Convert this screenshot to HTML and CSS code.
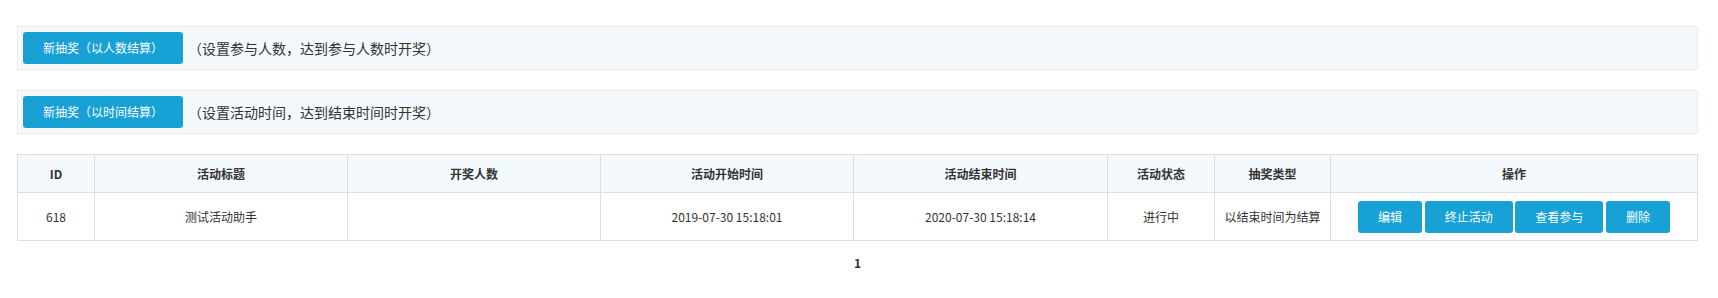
FILE: index.html
```html
<!DOCTYPE html>
<html lang="zh-CN">
<head>
  <meta charset="UTF-8" />
  <meta name="viewport" content="width=device-width, initial-scale=1.0" />
  <title>抽奖活动</title>
  <link rel="stylesheet" href="styles.css">
</head>
<body>
  <div class="page">
    <div class="tool-bar">
      <button class="btn">新抽奖（以人数结算）</button>
      <span class="tip">（设置参与人数，达到参与人数时开奖）</span>
    </div>
    <div class="tool-bar">
      <button class="btn">新抽奖（以时间结算）</button>
      <span class="tip">（设置活动时间，达到结束时间时开奖）</span>
    </div>

    <table class="list">
      <colgroup>
        <col class="c-id">
        <col class="c-title">
        <col class="c-num">
        <col class="c-start">
        <col class="c-end">
        <col class="c-status">
        <col class="c-type">
        <col class="c-ops">
      </colgroup>
      <thead>
        <tr>
          <th>ID</th>
          <th>活动标题</th>
          <th>开奖人数</th>
          <th>活动开始时间</th>
          <th>活动结束时间</th>
          <th>活动状态</th>
          <th>抽奖类型</th>
          <th>操作</th>
        </tr>
      </thead>
      <tbody>
        <tr>
          <td>618</td>
          <td>测试活动助手</td>
          <td></td>
          <td>2019-07-30 15:18:01</td>
          <td>2020-07-30 15:18:14</td>
          <td>进行中</td>
          <td>以结束时间为结算</td>
          <td class="ops">
            <button class="btn">编辑</button>
            <button class="btn">终止活动</button>
            <button class="btn">查看参与</button>
            <button class="btn">删除</button>
          </td>
        </tr>
      </tbody>
    </table>

    <div class="pager">1</div>
  </div>
</body>
</html>
```

FILE: styles.css
```css
body {
  margin: 0;
  padding: 0;
  background: #fff;
  font-family: "Noto Sans CJK SC", "Noto Sans", sans-serif;
  font-size: 12px;
  color: #333;
}
.page {
  padding: 26px 20px 0 17px;
}
.tool-bar {
  border: 1px solid #e8ebee;
  background: #f4f9fd;
  padding: 5px;
  margin-bottom: 20px;
  display: flex;
  align-items: center;
}
.btn {
  height: 32px;
  padding: 0 20px;
  border: none;
  border-radius: 3px;
  background: #18a1d5;
  color: #fff;
  font-family: inherit;
  font-size: 12px;
  line-height: 32px;
  cursor: pointer;
  vertical-align: middle;
}
.tip {
  margin-left: 5px;
  font-size: 14px;
  color: #333;
}
.list {
  width: 100%;
  border-collapse: collapse;
  table-layout: fixed;
  border: 1px solid #dcdee2;
}
.c-id { width: 77px; }
.c-title { width: 253px; }
.c-num { width: 253px; }
.c-start { width: 253px; }
.c-end { width: 254px; }
.c-status { width: 107px; }
.c-type { width: 116px; }
.list th,
.list td {
  border: 1px solid #dcdee2;
  text-align: center;
  padding: 0;
  font-size: 12px;
  color: #333;
}
.list th {
  height: 37px;
  background: #f4f9fd;
  font-weight: bold;
}
.list td {
  height: 47px;
}
.ops {
  white-space: nowrap;
}
.pager {
  margin-top: 13px;
  text-align: center;
  font-weight: bold;
  line-height: 17px;
  color: #333;
}
```
